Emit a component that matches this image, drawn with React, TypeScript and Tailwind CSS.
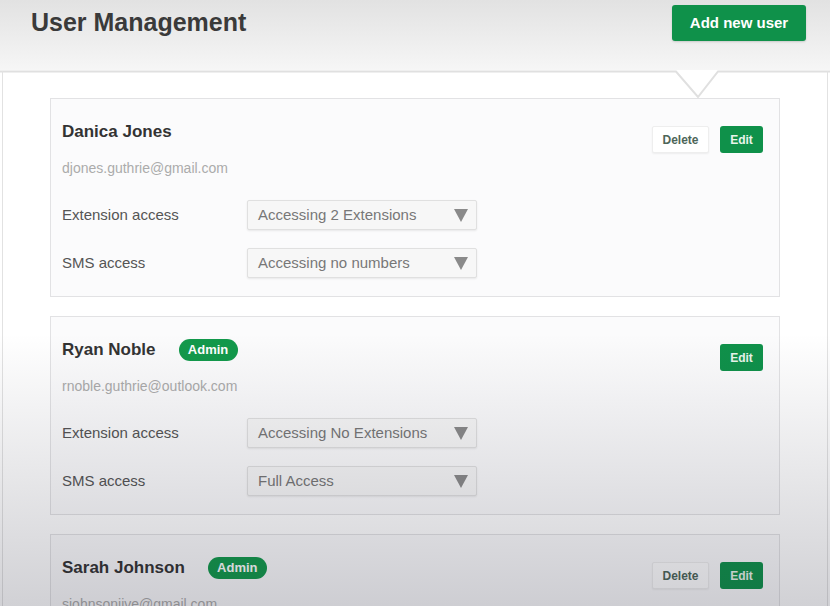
const users = [
  {
    name: "Danica Jones",
    email: "djones.guthrie@gmail.com",
    admin: false,
    canDelete: true,
    extension: "Accessing 2 Extensions",
    sms: "Accessing no numbers",
  },
  {
    name: "Ryan Noble",
    email: "rnoble.guthrie@outlook.com",
    admin: true,
    canDelete: false,
    extension: "Accessing No Extensions",
    sms: "Full Access",
  },
  {
    name: "Sarah Johnson",
    email: "sjohnsonjive@gmail.com",
    admin: true,
    canDelete: true,
    extension: "Accessing 1 Extension",
    sms: "Full Access",
  },
];

function Select({ value }: { value: string }) {
  return (
    <div className="flex h-[30px] w-[230px] items-center justify-between rounded-[2px] border border-[#e0e0e0] bg-[#f7f7f7] pl-[10px] pr-[8px] text-[15px] text-[#777] shadow-[0_1px_2px_rgba(0,0,0,0.08)]">
      <span>{value}</span>
      <svg width="14" height="13" viewBox="0 0 14 13">
        <path d="M0 0 H14 L7 13 Z" fill="#8a8a8a" />
      </svg>
    </div>
  );
}

function UserCard({ user }: { user: (typeof users)[number] }) {
  return (
    <div className="w-[730px] border border-[#e2e2e4] bg-[#fbfbfc] pl-[11px] pr-[16px] pt-[22px] pb-[18px]">
      <div className="flex items-start justify-between">
        <div>
          <div className="flex h-[22px] items-center">
            <span className="text-[17px] font-bold text-[#333]">{user.name}</span>
            {user.admin && (
              <span className="ml-[23px] flex h-[22px] w-[59px] items-center justify-center rounded-full bg-[#12994b] text-[13px] font-bold text-white">
                Admin
              </span>
            )}
          </div>
          <div className="mt-[17px] h-[16px] text-[14px] leading-[16px] text-[#ababab]">
            {user.email}
          </div>
        </div>
        <div className="mt-[5px] flex gap-[11px]">
          {user.canDelete && (
            <button className="h-[27px] w-[57px] rounded-[2px] border border-[#eeeeee] bg-white text-[12px] font-bold text-[#4d6659] shadow-[0_1px_2px_rgba(0,0,0,0.06)]">
              Delete
            </button>
          )}
          <button className="h-[27px] w-[43px] rounded-[3px] bg-[#0f914a] text-[12px] font-bold text-[#e8f5ec]">
            Edit
          </button>
        </div>
      </div>
      <div className="mt-[24px] flex flex-col gap-[18px]">
        <div className="flex items-center">
          <span className="w-[185px] text-[15px] text-[#555]">Extension access</span>
          <Select value={user.extension} />
        </div>
        <div className="flex items-center">
          <span className="w-[185px] text-[15px] text-[#555]">SMS access</span>
          <Select value={user.sms} />
        </div>
      </div>
    </div>
  );
}

export default function App() {
  return (
    <div className="relative h-[606px] w-[830px] overflow-hidden bg-white font-['Liberation_Sans',Arial,sans-serif]">
      <div className="flex h-[70px] items-start justify-between bg-gradient-to-b from-[#e2e2e2] to-[#f6f6f6] pl-[31px] pr-[24px]">
        <h1 className="mt-[4px] text-[25px] font-bold text-[#3a3a3a]">User Management</h1>
        <button className="mt-[5px] h-[36px] w-[134px] rounded-[3px] bg-[#0f914a] text-[15px] font-bold text-white shadow-[0_1px_2px_rgba(0,0,0,0.15)]">
          Add new user
        </button>
      </div>

      <svg width="830" height="28" viewBox="0 0 830 28" className="block">
        <path d="M0 1.5 H676 L698 27 L718 1.5 H830" fill="none" stroke="#e0e0e0" strokeWidth="2" />
        <path d="M2.5 1 V28 M827.5 1 V28" stroke="#e2e2e2" strokeWidth="1" />
      </svg>

      <div className="mx-[2px] h-full border-x border-[#e2e2e2] pl-[47px]">
        <div className="flex flex-col gap-[19px]">
          {users.map((u) => (
            <UserCard key={u.name} user={u} />
          ))}
        </div>
      </div>

      <div className="pointer-events-none absolute inset-0 bg-gradient-to-b from-transparent from-[55%] to-[rgba(25,25,45,0.2)]" />
    </div>
  );
}
